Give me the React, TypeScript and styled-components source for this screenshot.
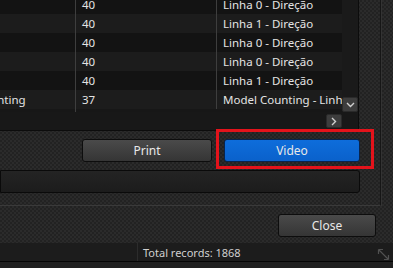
import styled, { createGlobalStyle } from "styled-components";

const GlobalStyle = createGlobalStyle`
  html, body {
    margin: 0;
    padding: 0;
    background: #1c1c1c;
  }
  * {
    box-sizing: border-box;
  }
`;

const texture = `
  background-color: #262626;
  background-image: repeating-conic-gradient(#2b2b2b 0 25%, #222222 0 50%);
  background-size: 4px 4px;
`;

const Window = styled.div`
  width: 393px;
  height: 268px;
  overflow: hidden;
  display: flex;
  flex-direction: column;
  font-family: "Noto Sans", "Liberation Sans", sans-serif;
  font-size: 11px;
  color: #e4e4e4;
  ${texture}
`;

const Group = styled.div`
  width: 381px;
  height: 206px;
  display: flex;
  flex-direction: column;
  border-right: 1px solid #161616;
  border-bottom: 1px solid #3a3a3a;
  box-shadow: 1px 0 0 #333333;
`;

const Grid = styled.div`
  width: 359px;
  height: 131px;
  display: flex;
  flex-direction: column;
  background: #171717;
  border-right: 1px solid #0c0c0c;
  border-bottom: 1px solid #0c0c0c;
`;

const GridTop = styled.div`
  height: 112px;
  display: flex;
`;

const RowsArea = styled.div`
  flex: 1;
  overflow: hidden;
`;

const Rows = styled.div`
  margin-top: -5px;
  margin-left: -67px;
`;

const Row = styled.div<{ $bg: string; $h?: number }>`
  display: grid;
  grid-template-columns: 142px 141px 126px;
  height: ${(props) => props.$h ?? 19}px;
  background: ${(props) => props.$bg};
`;

const Cell = styled.div<{ $divider?: boolean }>`
  padding-left: 6px;
  display: flex;
  align-items: center;
  white-space: nowrap;
  overflow: hidden;
  font-size: 11.5px;
  border-left: ${(props) => (props.$divider ? "1px solid #3e3e3e" : "none")};
`;

const VScroll = styled.div`
  width: 16px;
  display: flex;
  flex-direction: column;
  justify-content: flex-end;
  background: #1a1a1a;
`;

const ArrowButton = styled.div<{ $w: number; $h: number }>`
  width: ${(props) => props.$w}px;
  height: ${(props) => props.$h}px;
  display: flex;
  align-items: center;
  justify-content: center;
  background: #3d3d3d;
  border: 1px solid #2a2a2a;
  border-radius: 2px;
`;

const HScroll = styled.div`
  height: 18px;
  display: flex;
  align-items: flex-start;
  padding-top: 2px;
  background: #181818;
`;

const HTrack = styled.div`
  flex: 1;
`;

const Corner = styled.div`
  width: 16px;
`;

const ButtonRow = styled.div`
  height: 39px;
  display: flex;
  align-items: flex-start;
  padding: 8px 0 0 82px;
  gap: 12px;
`;

const Button = styled.button<{ $width: number }>`
  width: ${(props) => props.$width}px;
  height: 23px;
  border: 1px solid #0d0d0d;
  border-radius: 3px;
  background: linear-gradient(#4a4a4a, #353535);
  color: #e8e8e8;
  font-family: "Noto Sans", "Liberation Sans", sans-serif;
  font-size: 12px;
  padding: 0;
  cursor: pointer;
`;

const PrimaryButton = styled(Button)`
  background: linear-gradient(#0e6ddb, #0a61cb);
  border-color: #08244d;
`;

const Highlight = styled.div`
  position: relative;
  display: flex;
`;

const RedBox = styled.div`
  position: absolute;
  left: -8px;
  top: -10px;
  right: -14px;
  bottom: -7px;
  border: 3px solid #e3131b;
  pointer-events: none;
`;

const Bar = styled.div`
  width: 360px;
  height: 23px;
  background: linear-gradient(#242424, #1c1c1c);
  border: 1px solid #0a0a0a;
  border-radius: 0 3px 3px 0;
`;

const CloseRow = styled.div`
  height: 37px;
  display: flex;
  align-items: flex-start;
  justify-content: flex-end;
  padding: 8px 17px 0 0;
`;

const StatusBar = styled.div`
  height: 19px;
  display: flex;
  align-items: center;
  background: #1c1c1c;
  border-bottom: 1px solid #050505;
  position: relative;
`;

const StatusLeft = styled.div`
  width: 138px;
  height: 100%;
  border-right: 1px solid #2c2c2c;
`;

const StatusText = styled.span`
  padding-left: 5px;
  color: #cfcfcf;
  font-size: 11px;
`;

const Grip = styled.div`
  position: absolute;
  right: 3px;
  top: 5px;
  display: flex;
`;

const BottomStrip = styled.div`
  flex: 1;
  background: #202020;
`;

const rows = [
  { name: "", count: "40", desc: "Linha 0 - Direção" },
  { name: "", count: "40", desc: "Linha 1 - Direção" },
  { name: "", count: "40", desc: "Linha 0 - Direção" },
  { name: "", count: "40", desc: "Linha 0 - Direção" },
  { name: "", count: "40", desc: "Linha 1 - Direção" },
  { name: "Model Counting", count: "37", desc: "Model Counting - Linha 0" },
];

const App = () => {
  return (
    <>
      <GlobalStyle />
      <Window>
        <Group>
          <Grid>
            <GridTop>
              <RowsArea>
                <Rows>
                  {rows.map((row, i) => (
                    <Row key={i} $bg={i % 2 === 1 ? "#1c1c1c" : "#131313"}>
                      <Cell>{row.name}</Cell>
                      <Cell $divider>{row.count}</Cell>
                      <Cell $divider>{row.desc}</Cell>
                    </Row>
                  ))}
                  <Row $bg="transparent" $h={4}>
                    <Cell />
                    <Cell $divider />
                    <Cell />
                  </Row>
                </Rows>
              </RowsArea>
              <VScroll>
                <ArrowButton $w={16} $h={15}>
                  <svg width="9" height="6" viewBox="0 0 9 6">
                    <path d="M1 1 L4.5 4.5 L8 1" stroke="#d0d0d0" strokeWidth="1.4" fill="none" />
                  </svg>
                </ArrowButton>
              </VScroll>
            </GridTop>
            <HScroll>
              <HTrack />
              <ArrowButton $w={16} $h={14}>
                <svg width="6" height="9" viewBox="0 0 6 9">
                  <path d="M1 1 L4.5 4.5 L1 8" stroke="#d0d0d0" strokeWidth="1.4" fill="none" />
                </svg>
              </ArrowButton>
              <Corner />
            </HScroll>
          </Grid>
          <ButtonRow>
            <Button $width={130}>Print</Button>
            <Highlight>
              <PrimaryButton $width={136}>Video</PrimaryButton>
              <RedBox />
            </Highlight>
          </ButtonRow>
          <Bar />
        </Group>
        <CloseRow>
          <Button $width={98}>Close</Button>
        </CloseRow>
        <StatusBar>
          <StatusLeft />
          <StatusText>Total records: 1868</StatusText>
          <Grip>
            <svg width="13" height="13" viewBox="0 0 13 13">
              <path d="M1.5 1.5 L11.5 11.5 M1.5 1.5 L1.5 6 M1.5 1.5 L6 1.5 M11.5 11.5 L11.5 7 M11.5 11.5 L7 11.5" stroke="#505050" strokeWidth="1.2" fill="none" />
            </svg>
          </Grip>
        </StatusBar>
        <BottomStrip />
      </Window>
    </>
  );
};

export default App;
